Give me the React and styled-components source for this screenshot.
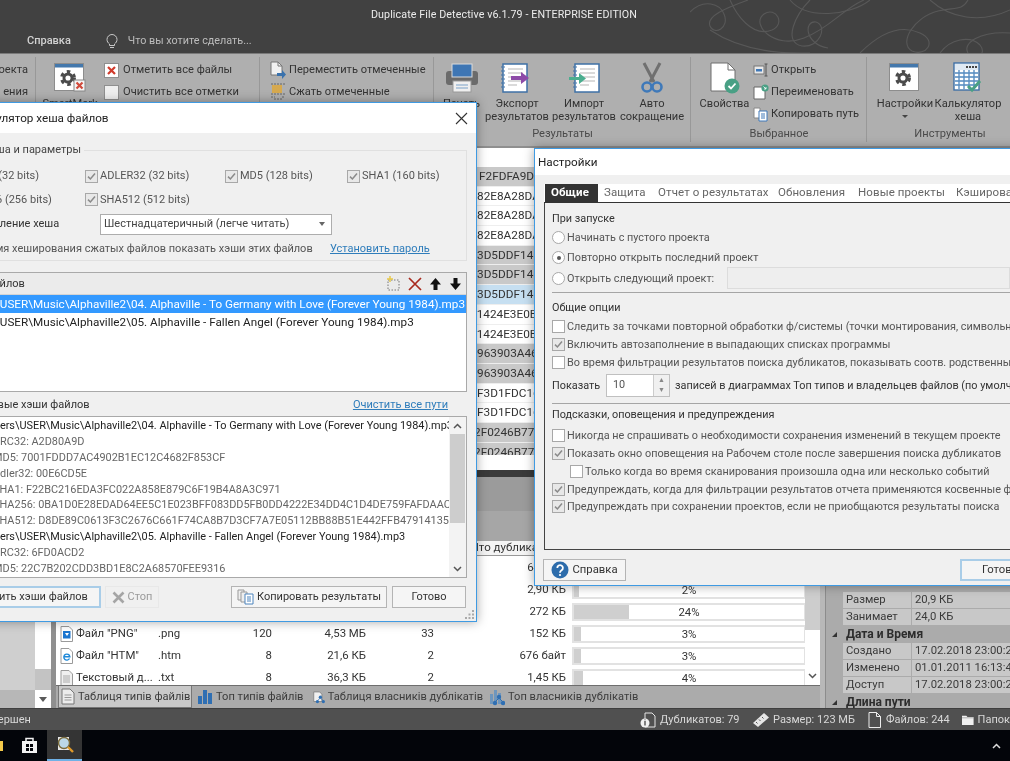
import React from 'react';
import styled, { createGlobalStyle } from 'styled-components';

const UI = `Roboto,"Noto Sans","Liberation Sans",sans-serif`;

const Global = createGlobalStyle`
  html, body { margin: 0; padding: 0; width: 1010px; height: 761px; overflow: hidden; background: #000; }
  * { box-sizing: border-box; }
`;

const Root = styled.div`
  position: relative; width: 1010px; height: 761px; overflow: hidden;
  display: flex; flex-direction: column;
  font: 11px/1.2 ${UI}; color: #333; filter: blur(0.4px);
`;

/* ---------- title ---------- */
const TitleArea = styled.header`
  position: relative; height: 53px; flex: none; background: #414141; color: #e6e6e6;
`;
const TitleText = styled.div`
  height: 29px; line-height: 29px; text-align: center; font-size: 10.7px; color: #ececec; letter-spacing: .1px; padding-left: 3px; padding-right: 5px;
`;
const MenuRow = styled.div`
  display: flex; align-items: center; height: 24px; padding-left: 27px; color: #d6d6d6; font-size: 11px;
`;
const MenuLabel = styled.span`font-weight: 500; color: #d2d2d2; margin-right: 35px;`;
const Hint = styled.span`color: #bdbdbd; margin-left: 10px; font-size: 10.8px;`;
const FlourishBox = styled.svg`position: absolute; right: 0; top: 0;`;

/* ---------- ribbon ---------- */
const Ribbon = styled.nav`
  height: 95px; flex: none; display: flex; background: #afafaf; border-top: 1px solid #7a7a7a; border-bottom: 2px solid #8f8f8f; overflow: hidden; font-size: 11.1px;
`;
const Group = styled.section`
  flex: none; width: ${p => p.$w}px; display: flex; flex-direction: column; position: relative;
  &::after { content: ''; position: absolute; right: 0; top: 3px; bottom: 4px; width: 1px; background: #989898; }
`;
const GroupBody = styled.div`flex: 1; display: flex; padding-left: ${p => p.$pad || 0}px; overflow: hidden;`;
const GroupLabel = styled.div`height: 21px; text-align: center; color: #4a4a4a; line-height: 18px;`;
const Big = styled.div`
  flex: none; width: ${p => p.$w}px; display: flex; flex-direction: column; align-items: center; padding-top: 7px; color: #333; white-space: nowrap;
`;
const BigIcon = styled.div`height: 34px; display: flex; align-items: center; justify-content: center;`;
const BigText = styled.div`text-align: center; line-height: 13px; margin-top: 2px;`;
const Caret = styled.div`width: 0; height: 0; border: 3px solid transparent; border-top-color: #444; margin: 5px auto 0;`;
const SmallList = styled.div`display: flex; flex-direction: column; padding-top: 5px; padding-left: ${p => p.$pad || 0}px;`;
const SmallItem = styled.div`display: flex; align-items: center; gap: ${p => p.$gap ?? 4}px; height: 22px; white-space: nowrap; color: #333;`;
const RightLine = styled.div`height: 22px; width: 36px; display: flex; align-items: center; justify-content: flex-end; padding-right: 8px; color: #333; white-space: nowrap;`;

/* ---------- workspace ---------- */
const Workspace = styled.main`flex: 1; display: flex; min-height: 0; background: #ababab;`;
const LeftPane = styled.aside`flex: none; width: 56px; display: flex; background: #8f8f8f;`;
const LeftTree = styled.div`width: 35px; background: #cfcfcf; border-bottom: 18px solid #b7b7b7;`;
const LeftBar = styled.div`width: 16px; display: flex; flex-direction: column; justify-content: flex-end; background: #fff;`;
const LeftThumb = styled.div`height: 21px; background: #c3c3c3; flex: none;`;
const LeftArrow = styled.div`height: 18px; background: #fff; display: flex; align-items: center; justify-content: center; flex: none;`;
const TriDown = styled.div`width: 0; height: 0; border: 4px solid transparent; border-top: 5px solid #5a5a5a; margin-top: 5px;`;
const Center = styled.div`flex: none; width: 764px; display: flex; flex-direction: column; min-height: 0;`;
const HashList = styled.div`height: 322px; background: #fff; padding-top: 19px; overflow: hidden; flex: none;`;
const HashView = styled.div`height: 288px; overflow: hidden;`;
const HashRow = styled.div`
  height: 19.7px; line-height: 19.7px; padding-left: ${p => p.$pad}px; white-space: nowrap; color: #333; font-size: 11.8px;
  background: ${p => p.$tone === 'sel' ? '#c6dff1' : p.$tone === 'gray' ? '#c9c9c9' : '#fff'};
  border-bottom: 1px solid #eee;
`;
const Splitter = styled.div`height: 7px; flex: none; background: #3a3a3a;`;
const GrayChart = styled.div`height: 34px; flex: none; background: #9b9b9b;`;
const GrayChartLower = styled.div`height: 30px; flex: none; background: #a6a6a6;`;
const ChartCaption = styled.div`height: 15px; flex: none; background: #f4f4f4; padding-left: 415px; line-height: 12px; white-space: nowrap; border-bottom: 1px solid #999; font-size: 11.5px;`;
const LowerWrap = styled.div`flex: 1; display: flex; min-height: 0; background: #fff;`;
const Table = styled.div`flex: 1; overflow: hidden; padding-left: 4px; padding-top: 1px;`;
const Row = styled.div`
  display: grid; grid-template-columns: 98px 62px 52px 94px 68px 132px 240px; height: 22px; align-items: center; white-space: nowrap; color: #333; font-size: 11.4px;
`;
const NameCell = styled.div`display: flex; align-items: center; gap: 3px; overflow: hidden;`;
const Num = styled.div`text-align: right;`;
const BarCell = styled.div`padding-left: 6px;`;
const Bar = styled.div`position: relative; height: 18px; border: 2px solid #e2e2e2; background: #fff; text-align: center; line-height: 14px; color: #333;`;
const BarFill = styled.div`position: absolute; left: 0; top: 0; bottom: 0; background: #cfcfcf;`;
const BarText = styled.span`position: relative;`;
const VScroll = styled.div`width: 15px; flex: none; display: flex; flex-direction: column; background: #fff;`;
const VThumb = styled.div`height: 74px; flex: none; background: #cdcdcd;`;
const VSpace = styled.div`flex: 1;`;
const VArrow = styled.div`height: 19px; display: flex; justify-content: center; align-items: center; color: #555;`;
const TabsBar = styled.div`height: 23px; flex: none; display: flex; align-items: stretch; background: #ababab; border-top: 1px solid #6e6e6e; padding-left: 2px; white-space: nowrap;`;
const BottomTab = styled.div`
  display: flex; align-items: center; gap: 3px; flex: none; width: ${p => p.$w}px; padding-left: ${p => p.$active ? 2 : 6}px; color: #3c3c3c; font-size: 11.1px;
  background: ${p => p.$active ? '#c9c9c9' : 'transparent'}; ${p => p.$active ? 'border: 1px solid #777; border-top: 0;' : ''}
`;
const RightPane = styled.aside`flex: 1; overflow: hidden; background: #ababab; border-left: 5px solid #b8b8b8; padding-left: 5px; box-shadow: inset 1px 0 #8c8c8c;`;
const PropGrid = styled.div`margin-top: 444px; display: flex; flex-direction: column;`;
const PropHead = styled.div`height: 17px; line-height: 17px; display: flex; align-items: center; font-weight: 700; color: #2c2c2c; font-size: 12px;`;
const PropTri = styled.span`width: 0; height: 0; border-bottom: 5px solid #333; border-left: 5px solid transparent; margin: 0 9px 0 2px;`;
const PropRow = styled.div`height: 17px; display: grid; grid-template-columns: 68px 1fr; margin-left: 13px; column-gap: 1px; line-height: 16px; white-space: nowrap; color: #3a3a3a;`;
const PropCell = styled.div`background: #c8c8c8; padding-left: 3px; border-bottom: 1px solid #ababab; font-size: 11.3px;`;

/* ---------- status and task bars ---------- */
const StatusBar = styled.footer`height: 22px; flex: none; background: #505050; color: #d8d8d8; display: flex; align-items: center; white-space: nowrap; border-top: 1px solid #3f3f3f; font-size: 11px;`;
const StatusLeft = styled.div`flex: 1; margin-left: -21px;`;
const StatusItem = styled.div`display: flex; align-items: center; gap: ${p => p.$gap}px; width: ${p => p.$w}px; flex: none;`;
const TaskBar = styled.div`height: 31px; flex: none; background: #03050a; display: flex; align-items: stretch; padding-left: 47px; position: relative;`;
const TaskLeft = styled.div`position: absolute; left: 21px; top: 0; height: 100%; display: flex; align-items: center;`;
const TaskFolder = styled.div`position: absolute; left: 0; top: 11px; width: 3px; height: 10px; background: #f4c94a;`;
const TaskApp = styled.div`width: 35px; background: #343434; border-bottom: 2px solid #6fb1e6; display: flex; align-items: center; justify-content: center;`;
const TaskEnd = styled.div`position: absolute; right: 9px; top: 9px; color: #dcdcdc;`;

/* ---------- dialog common ---------- */
const Dialog = styled.div`
  position: absolute; left: ${p => p.$x}px; top: ${p => p.$y}px; width: ${p => p.$w}px; height: ${p => p.$h}px;
  background: #f0f0f0; border: 1px solid #3f9ae2; box-shadow: 0 0 10px rgba(0,0,0,.35); display: flex; flex-direction: column;
`;
const DlgTitle = styled.div`
  height: ${p => p.$h}px; flex: none; background: #fff; display: flex; align-items: center; justify-content: space-between; color: #222; font-size: 11.7px;
  padding: 0 8px 0 ${p => p.$pad}px;
`;
const Btn = styled.div`
  height: 22px; flex: none; display: flex; align-items: center; justify-content: center; gap: 3px; width: ${p => p.$w}px; white-space: nowrap;
  margin-left: ${p => p.$ml || 0}px; color: ${p => p.$off ? '#9a9a9a' : '#333'};
  border: ${p => p.$focus ? '2px solid #a9cde8' : `1px solid ${p.$off ? '#e8e8e8' : '#b4b4b4'}`}; background: ${p => p.$off ? '#f0f0f0' : '#f5f5f5'};
`;
const Link = styled.span`color: #2f7dbb; text-decoration: underline; white-space: nowrap;`;
const Box = styled.span`
  flex: none; width: 13px; height: 13px; border: 1px solid #a8a8a8; background: ${p => p.$checked ? '#e8e8e8' : '#fff'}; display: inline-flex; align-items: center; justify-content: center;
`;
const CheckRow = styled.div`display: flex; align-items: center; gap: 2px; white-space: nowrap; height: ${p => p.$h || 18}px; padding-left: ${p => p.$pad || 0}px; color: #555; flex: none;`;
const Radio = styled.span`
  flex: none; width: 13px; height: 13px; border-radius: 50%; border: 1px solid #a8a8a8; background: #fff; display: inline-flex; align-items: center; justify-content: center;
  &::after { content: ''; width: 4px; height: 4px; border-radius: 50%; background: ${p => p.$on ? '#555' : 'transparent'}; }
`;
const TickSvg = () => <svg width="9" height="9" viewBox="0 0 9 9"><path d="M1 4.6 3.4 7 8 1.5" fill="none" stroke="#8a8a8a" strokeWidth="1.5"/></svg>;
const Check = ({ on, children, h, pad }) => <CheckRow $h={h} $pad={pad}><Box $checked={on}>{on && <TickSvg />}</Box><span>{children}</span></CheckRow>;

/* hash dialog */
const HashBody = styled.div`flex: 1; padding: 0 9px 0 3px; display: flex; flex-direction: column; position: relative; font-size: 11px;`;
const Field = styled.fieldset`margin: 10px 0 0; height: 118px; border: 1px solid #e0e0e0; padding: 0 0 0 2px; flex: none; min-width: 0;`;
const FieldLegend = styled.legend`padding: 0 3px 0 0; color: #444; line-height: 14px; margin-left: -24px;`;
const AlgoGrid = styled.div`display: grid; grid-template-columns: 138px 140px 122px 1fr; row-gap: 7.5px; margin-top: 11px;`;
const ComboRow = styled.div`display: flex; align-items: center; height: 21px; margin-top: 6px; white-space: nowrap; color: #333;`;
const ComboLabel = styled.span`width: 153px; flex: none; padding-left: 3px;`;
const Combo = styled.div`width: 232px; height: 21px; background: #fff; border: 1px solid #adadad; display: flex; align-items: center; justify-content: space-between; padding: 0 6px 0 3px; color: #444;`;
const ComboTri = styled.span`width: 0; height: 0; border: 3px solid transparent; border-top: 4px solid #666; margin-top: 3px;`;
const PassRow = styled.div`display: flex; align-items: center; height: 16px; margin-top: 6px; white-space: nowrap; color: #555;`;
const PassText = styled.span`width: 383px; flex: none; padding-left: 14px;`;
const ListBox = styled.div`margin-top: 11px; height: 120px; flex: none; border: 1px solid #a9a9a9; background: #fff; overflow: hidden;`;
const ListHead = styled.div`height: 22px; display: flex; align-items: center; justify-content: space-between; background: #ebebeb; padding: 0 4px 0 0; color: #333; border-bottom: 1px solid #d4d4d4;`;
const ListIcons = styled.div`display: flex; align-items: center; gap: 7px;`;
const ListItem = styled.div`
  height: 18px; line-height: 18px; padding-left: 5px; white-space: nowrap; overflow: hidden; font-size: 11.7px;
  background: ${p => p.$sel ? '#3399ff' : 'transparent'}; color: ${p => p.$sel ? '#fff' : '#222'};
`;
const ResultHead = styled.div`display: flex; align-items: center; justify-content: space-between; height: 17px; margin-top: 4px; padding: 0 19px 0 31px; color: #333; flex: none;`;
const OutBox = styled.div`margin-top: 3px; height: 162px; flex: none; border: 1px solid #a9a9a9; background: #fff; display: flex; overflow: hidden;`;
const OutText = styled.div`flex: 1; overflow: hidden; white-space: nowrap; padding-top: 1px;`;
const OutLine = styled.div`height: 15.9px; line-height: 15.9px; padding-left: ${p => p.$path ? 28 : 48}px; color: ${p => p.$path ? '#222' : '#666'}; font-size: 10.9px;`;
const OutScroll = styled.div`width: 17px; flex: none; display: flex; flex-direction: column; background: #f3f3f3;`;
const OutArrow = styled.div`height: 17px; flex: none; display: flex; align-items: center; justify-content: center; color: #555;`;
const OutThumb = styled.div`height: 89px; flex: none; background: #cdcdcd; margin: 0 1px;`;
const BtnRow = styled.div`display: flex; margin-top: 8px; flex: none;`;
const Grip = styled.svg`position: absolute; right: 1px; bottom: 1px;`;

/* settings dialog */
const SettingsBody = styled.div`flex: 1; display: flex; flex-direction: column; font-size: 10.85px; min-height: 0;`;
const TabStrip = styled.div`display: flex; align-items: stretch; height: 19px; margin: 9px 0 0 9px; background: #fff; white-space: nowrap; flex: none; padding-left: 1px; border-bottom: 1px solid #333; font-size: 11.5px;`;
const SetTab = styled.div`
  padding: 0 6px; line-height: 17px; width: ${p => p.$w}px; flex: none; font-weight: ${p => p.$active ? 700 : 400};
  background: ${p => p.$active ? '#333' : 'transparent'}; color: ${p => p.$active ? '#fff' : '#666'}; letter-spacing: .1px;
`;
const Panel = styled.div`height: 347px; flex: none; margin-left: 9px; border-left: 1px solid #444; border-bottom: 1px solid #444; padding: 7px 0 0 7px; overflow: hidden; display: flex; flex-direction: column;`;
const Section = styled.div`height: 17px; line-height: 17px; flex: none; color: #333; white-space: nowrap; margin-bottom: ${p => p.$b || 0}px;`;
const RadioRow = styled.div`display: flex; align-items: center; gap: 2px; height: 20.5px; flex: none; white-space: nowrap; color: #555;`;
const ProjectLabel = styled.span`width: 158px; flex: none;`;
const PathInput = styled.div`width: 283px; height: 22px; background: #eee; border: 1px solid #dcdcdc;`;
const Rule = styled.div`height: 1px; flex: none; background: #a5a5a5; margin-top: ${p => p.$t}px; margin-bottom: ${p => p.$b}px;`;
const ShowRow = styled.div`display: flex; align-items: center; height: 23px; margin-top: 3px; flex: none; white-space: nowrap; color: #333;`;
const ShowLabel = styled.span`width: 54px; flex: none;`;
const Spin = styled.div`width: 64px; height: 23px; margin-right: 5px; border: 1px solid #c0c0c0; display: flex; background: #fff; flex: none;`;
const SpinVal = styled.div`flex: 1; padding-left: 6px; line-height: 19px; color: #555;`;
const SpinBtns = styled.div`width: 16px; display: flex; flex-direction: column; background: #f0f0f0; border-left: 1px solid #ccc;`;
const SpinPart = styled.div`flex: 1; display: flex; align-items: center; justify-content: center; color: #888; font-size: 7px; line-height: 7px;`;
const Footer = styled.div`display: flex; justify-content: space-between; width: 505px; padding-left: 8px; margin-top: 9px; flex: none; font-size: 11.3px;`;

/* ---------- icons (drawings) ---------- */
const Gear = ({ cx, cy, r, fill = '#4b4b4b' }) => (
  <g>
    <circle cx={cx} cy={cy} r={r} fill="none" stroke={fill} strokeWidth={r * .45} strokeDasharray={`${r * .55} ${r * .55}`} />
    <circle cx={cx} cy={cy} r={r * .62} fill="none" stroke={fill} strokeWidth={r * .45} />
  </g>
);
const WinIcon = ({ badge }) => (
  <svg width="32" height="30" viewBox="0 0 32 30">
    <rect x=".5" y=".5" width="29" height="27" fill="#fff" stroke="#8d8d8d" />
    <rect x="1" y="1" width="28" height="3.5" fill="#4478ac" />
    <Gear cx={14} cy={15} r={6.5} />
    {badge && <g><rect x="20" y="17" width="11" height="11" fill="#f5f5f5" stroke="#888" /><path d="M22.5 19.5 28.5 25.5M28.5 19.5 22.5 25.5" stroke="#d04a3c" strokeWidth="2.2" /></g>}
  </svg>
);
const MarkBox = () => <svg width="15" height="15" viewBox="0 0 15 15"><rect x=".5" y=".5" width="14" height="14" fill="#fff" stroke="#8f8f8f"/><path d="M4 4 11 11M11 4 4 11" stroke="#d13b2c" strokeWidth="2.2"/></svg>;
const ClearBox = () => <svg width="15" height="15" viewBox="0 0 15 15"><rect x=".5" y=".5" width="14" height="14" fill="#efefef" stroke="#8f8f8f"/></svg>;
const MoveIcon = () => <svg width="16" height="18" viewBox="0 0 16 18"><path d="M1 1h7l4 4v9H1z" fill="#f1f1f1" stroke="#777"/><path d="M8 1v4h4" fill="none" stroke="#777"/><path d="M7 12h5V9l4 4.500-4 4.500v-3H7z" fill="#3a72ad"/></svg>;
const ZipIcon = () => <svg width="16" height="18" viewBox="0 0 16 18"><rect x="2" y="2" width="10" height="8" fill="#d6a94f"/><path d="M1 1h14M1 11h14M1 14h4M12 14h3M4 16h8" stroke="#666" strokeDasharray="2 1"/></svg>;
const PrintIcon = () => (
  <svg width="34" height="30" viewBox="0 0 34 30">
    <rect x="1" y="8" width="32" height="14" rx="3" fill="#6b6b6b"/>
    <rect x="7" y="1" width="20" height="13" fill="#3e76b4" stroke="#dcdcdc"/>
    <rect x="8" y="18" width="18" height="11" fill="#f0f0f0" stroke="#9a9a9a"/>
    <path d="M11 22h12M11 25h12" stroke="#7ba1c8"/>
  </svg>
);
const NoteIcon = ({ arrow, dir }) => {
  const x = dir === 'in' ? 7 : 2;
  return (
    <svg width="32" height="30" viewBox="0 0 32 30">
      <rect x={x} y="1" width="24" height="28" fill="#fff" stroke="#3f71a7" strokeWidth="1.5" />
      {[4, 8, 12, 16, 20, 24].map(y => <path key={y} d={`M${x - 2} ${y}h4`} stroke="#3f71a7" strokeWidth="1.2" strokeDasharray="1.500 1" />)}
      {[6, 10, 14, 18, 22].map(y => <path key={y} d={`M${x + 5} ${y}h${y === 22 ? 9 : 15}`} stroke="#b5b5b5" />)}
      <path d={dir === 'in' ? 'M1 14h10v-4l7 5.500-7 5.500v-4H1z' : 'M10 13h10V9l8 6-8 6v-4H10z'} fill={arrow} />
    </svg>
  );
};
const Scissors = () => (
  <svg width="24" height="32" viewBox="0 0 24 32">
    <path d="M4 1 14 20M20 1 10 20" stroke="#707070" strokeWidth="3" />
    <circle cx="7" cy="25" r="4.500" fill="none" stroke="#3f79b9" strokeWidth="2.600"/>
    <circle cx="17" cy="25" r="4.500" fill="none" stroke="#3f79b9" strokeWidth="2.600"/>
  </svg>
);
const PropsIcon = () => (
  <svg width="34" height="32" viewBox="0 0 34 32">
    <path d="M3 1h17l7 7v21H3z" fill="#fff" stroke="#6f6f6f"/><path d="M20 1v7h7" fill="none" stroke="#6f6f6f"/>
    <circle cx="24" cy="24" r="7.500" fill="#49a085"/><path d="M20.500 24l2.500 2.500 4.500-5" fill="none" stroke="#fff" strokeWidth="1.800"/>
  </svg>
);
const OpenIcon = () => <svg width="16" height="14" viewBox="0 0 16 14"><rect x="1" y="3" width="10" height="8" fill="#e8e8e8" stroke="#777"/><rect x="3" y="6" width="6" height="2.500" fill="#3f79b9"/><path d="M13 1v12M11.500 1h3M11.500 13h3" stroke="#555"/></svg>;
const RenameIcon = () => <svg width="16" height="16" viewBox="0 0 16 16"><path d="M1 3h9l2 2v10H1z" fill="#fff" stroke="#666"/><circle cx="12" cy="4" r="3.600" fill="#49a085"/><path d="M10.500 2.500 13 5M13 3v2h-2" fill="none" stroke="#fff" strokeWidth=".8"/></svg>;
const CopyPathIcon = () => <svg width="16" height="15" viewBox="0 0 16 15"><path d="M1 1h6v10H1z" fill="#fff" stroke="#888"/><path d="M6 4h8v10H6z" fill="#fff" stroke="#3f79b9"/><path d="M8 7h4M8 9h4M8 11h4" stroke="#3f79b9"/></svg>;
const CalcIcon = () => (
  <svg width="30" height="32" viewBox="0 0 30 32">
    <rect x="1" y="1" width="25" height="27" fill="#fff" stroke="#3f71a7" strokeWidth="1.400"/>
    <rect x="2" y="2" width="23" height="6" fill="#dfe9f3"/>
    <path d="M13 5h2M16 5h2M19 5h2M22 5h2" stroke="#444" strokeWidth="2"/>
    {[11, 15, 19, 23].map(y => <path key={y} d={`M2 ${y}h23`} stroke="#5b8fc2" strokeWidth="1.600"/>)}
    {[6, 11, 16, 21].map(x => <path key={x} d={`M${x} 8v19`} stroke="#5b8fc2" strokeWidth="1.400"/>)}
    <path d="M15 24l4 4 8-9" fill="none" stroke="#49a085" strokeWidth="3"/>
  </svg>
);
const FileIcon = ({ kind }) => (
  <svg width="13" height="16" viewBox="0 0 13 16" style={{ flex: 'none' }}>
    <path d="M1 .5h8l3.500 3.500v11.500H1z" fill={kind === 'txt' ? '#f0f0f0' : '#fff'} stroke="#9a9a9a"/>
    {kind === 'png' && <g><rect x="3" y="5" width="7.500" height="7.500" fill="#1b76d0"/><path d="M5 7h4l-2 3z" fill="#fff"/></g>}
    {kind === 'htm' && <path d="M9.500 10.500a3 3 0 1 1 .3-1.800H4" fill="none" stroke="#1e88d8" strokeWidth="1.400"/>}
    {kind === 'txt' && <path d="M3 6h7M3 8h7M3 10h7M3 12h7" stroke="#aaa"/>}
  </svg>
);
const TabDoc = () => <svg width="14" height="17" viewBox="0 0 14 17"><path d="M1 1h8l4 4v11H1z" fill="#ececec" stroke="#777"/><path d="M3.500 7h7M3.500 9.500h7M3.500 12h7" stroke="#999"/></svg>;
const TabBars = () => <svg width="15" height="14" viewBox="0 0 15 14"><path d="M0 6h4v8H0zM5 0h4v14H5zM10 3h4v11h-4z" fill="#2f6fb3"/></svg>;
const TabOwner = ({ bars }) => (
  <svg width="16" height="17" viewBox="0 0 16 17">
    {bars ? <path d="M1 5h3v10H1zM5 1h3v14H5zM9 4h3v11H9z" fill="#6e96bd"/> : <path d="M1 1h8l3 3v10H1z" fill="#f0f0f0" stroke="#777"/>}
    <circle cx="10" cy="8" r="2.200" fill="#2f6fb3"/><circle cx="6" cy="14" r="2.200" fill="#2f6fb3"/><circle cx="14" cy="14" r="2.200" fill="#2f6fb3"/>
    <path d="M10 9 6 13M10 9l4 4" stroke="#2f6fb3"/>
  </svg>
);
const Bulb = () => <svg width="12" height="15" viewBox="0 0 12 15"><path d="M3.500 10C2 8.800 1 7.500 1 5.500a5 5 0 0 1 10 0c0 2-1 3.300-2.500 4.500v1.500h-5zM4 13.500h4" fill="none" stroke="#c8c8c8" strokeWidth="1"/></svg>;
const Close = ({ s = 13 }) => <svg width={s} height={s} viewBox="0 0 13 13"><path d="M1 1 12 12M12 1 1 12" stroke="#333" strokeWidth="1.100"/></svg>;
const ChevUp = () => <svg width="9" height="6" viewBox="0 0 9 6"><path d="M1 5 4.500 1.500 8 5" fill="none" stroke="currentColor" strokeWidth="1.500"/></svg>;
const ChevDown = () => <svg width="9" height="6" viewBox="0 0 9 6"><path d="M1 1 4.500 4.500 8 1" fill="none" stroke="currentColor" strokeWidth="1.500"/></svg>;
const NewItem = () => <svg width="15" height="15" viewBox="0 0 15 15"><rect x="2" y="4" width="11" height="10" fill="none" stroke="#777" strokeDasharray="1.500 1.500"/><path d="M4 0v6M1 3h6" stroke="#e8c94a" strokeWidth="1.500"/></svg>;
const RedX = () => <svg width="14" height="14" viewBox="0 0 14 14"><path d="M1 1 13 13M13 1 1 13" stroke="#a92a1e" strokeWidth="1.700"/></svg>;
const ArrowUp = () => <svg width="13" height="14" viewBox="0 0 13 14"><path d="M6.500 1 12 7.500H8.500V13h-4V7.500H1z" fill="#111"/></svg>;
const ArrowDown = () => <svg width="13" height="14" viewBox="0 0 13 14"><path d="M6.500 13 12 6.500H8.500V1h-4v5.500H1z" fill="#111"/></svg>;
const GrayX = () => <svg width="13" height="13" viewBox="0 0 13 13"><path d="M1.500 1.500 11.500 11.500M11.500 1.500 1.500 11.500" stroke="#a5a5a5" strokeWidth="2.600"/></svg>;
const CopyBtnIcon = () => <svg width="17" height="16" viewBox="0 0 17 16"><path d="M1 1h6v10H1z" fill="#eee" stroke="#999"/><path d="M4 3h6v10H4z" fill="#eee" stroke="#999"/><path d="M8 5h8v10H8z" fill="#fff" stroke="#4d84bd"/><path d="M10 8h4M10 10h4M10 12h4" stroke="#4d84bd"/></svg>;
const HelpIcon = () => <svg width="18" height="18" viewBox="0 0 18 18"><circle cx="9" cy="9" r="8.500" fill="#2d6cab"/><path d="M6.300 7a2.800 2.800 0 1 1 4.300 2.300c-1 .7-1.600 1.200-1.600 2.400" fill="none" stroke="#fff" strokeWidth="1.800"/><circle cx="9" cy="14" r="1.100" fill="#fff"/></svg>;
const StDup = () => <svg width="16" height="16" viewBox="0 0 16 16"><path d="M5 1h7l3 3v11H5z" fill="none" stroke="#e4e4e4"/><circle cx="5" cy="11" r="4.500" fill="#f0f0f0"/><path d="M5 9v4.500M5 7.500v.8" stroke="#444" strokeWidth="1.300"/></svg>;
const StRuler = () => <svg width="18" height="16" viewBox="0 0 18 16"><path d="M1 11 12 1l5 4.500L6 15z" fill="#e6e6e6"/><path d="M4 10l1.500 1.500M7 7.500 8.500 9M10 5l1.500 1.500" stroke="#555"/></svg>;
const StFile = () => <svg width="13" height="16" viewBox="0 0 13 16"><path d="M1 .5h7.500l4 4v11H1z" fill="none" stroke="#ececec"/><path d="M8.500 .5v4h4" fill="none" stroke="#ececec"/></svg>;
const StFolder = () => <svg width="16" height="14" viewBox="0 0 16 14"><path d="M0 1h6l1.500 2H16v11H0z" fill="#f0f0f0"/><path d="M0 4h16" stroke="#505050" strokeWidth=".6"/></svg>;
const StoreIcon = () => <svg width="17" height="17" viewBox="0 0 17 17"><path d="M1 4h15v12H1z" fill="#f2f2f2"/><path d="M5 4V1.500h7V4" fill="none" stroke="#f2f2f2" strokeWidth="1.500"/><path d="M5 7h3v3H5zM9 7h3v3H9zM5 11h3v3H5zM9 11h3v3H9z" fill="#03050a"/></svg>;
const AppIcon = () => <svg width="18" height="19" viewBox="0 0 18 19"><rect x="2" y="2" width="11" height="13" fill="#e7e7e7"/><circle cx="8" cy="8" r="5.500" fill="#bcd8e8" stroke="#7a6a3a" strokeWidth="1.400"/><path d="m12 12 5 5" stroke="#e09a2a" strokeWidth="2.400"/></svg>;

const Flourish = () => (
  <FlourishBox width="320" height="53" viewBox="0 0 320 53" fill="none" stroke="#585858" strokeWidth="1.100">
    <path d="M0 12C14-2 30 4 34 14c6 14-10 22-14 12S36 8 58 0" />
    <path d="M40 0c6 14 22 38 42 30 14-6 4-24-8-16-14 10 10 36 40 24 26-10 40-30 60-38" />
    <path d="M120 0c-14 14-28 42-8 46 18 2 26-20 14-24-12-2-12 22 12 26" />
    <path d="M170 53c16-16 38-30 60-20 18 8 6 24-8 18-14-8 2-34 26-40 16-4 24 0 30-11" />
    <path d="M100 0c16 20 60 16 80 0M240 0c20 18 50 24 80 10" />
    <path d="M250 53c10-14 30-18 40-8 8 10-6 16-12 8-6-10 12-22 42-20" />
    <path d="M20 30c30 20 70 24 100 23" />
  </FlourishBox>
);

const Small = ({ icon, children, gap }) => <SmallItem $gap={gap}>{icon}<span>{children}</span></SmallItem>;

const hashRows = [
  ['F2FDFA9DA', 'gray', 423], ['82E8A28DA'], ['82E8A28DA'], ['82E8A28DA'], ['3D5DDF14E', 'gray'], ['3D5DDF14E', 'gray'], ['3D5DDF14E', 'sel'],
  ['31424E3E0B', null, 414], ['31424E3E0B', null, 414], ['963903A46', 'gray'], ['963903A46', 'gray'], ['F3D1FDC16'], ['F3D1FDC16'], ['2F0246B77F', 'gray', 418], ['2F0246B77F', 'gray', 418],
];
const tableRows = [
  ['txt', 'Файл "MP3"', '.mp3', '44', '108 МБ', '12', '64,8 КБ', 62],
  ['txt', 'Файл "JPG"', '.jpg', '16', '1,22 МБ', '4', '2,90 КБ', 2],
  ['txt', 'Файл "ZIP"', '.zip', '12', '8,05 МБ', '6', '272 КБ', 24],
  ['png', 'Файл "PNG"', '.png', '120', '4,53 МБ', '33', '152 КБ', 3],
  ['htm', 'Файл "HTM"', '.htm', '8', '21,6 КБ', '2', '676 байт', 3],
  ['txt', 'Текстовый д...', '.txt', '8', '36,3 КБ', '2', '1,45 КБ', 4],
];
const algos = ['CRC32 (32 bits)', 'ADLER32 (32 bits)', 'MD5 (128 bits)', 'SHA1 (160 bits)', 'SHA256 (256 bits)', 'SHA512 (512 bits)'];
const outLines = [
  [1, 'C:\\Users\\USER\\Music\\Alphaville2\\04. Alphaville - To Germany with Love (Forever Young 1984).mp3'],
  [0, 'CRC32: A2D80A9D'],
  [0, 'MD5: 7001FDDD7AC4902B1EC12C4682F853CF'],
  [0, 'Adler32: 00E6CD5E'],
  [0, 'SHA1: F22BC216EDA3FC022A858E879C6F19B4A8A3C971'],
  [0, 'SHA256: 0BA1D0E28EDAD64EE5C1E023BFF083DD5FB0DD4222E34DD4C1D4DE759FAFDAAC'],
  [0, 'SHA512: D8DE89C0613F3C2676C661F74CA8B7D3CF7A7E05112BB88B51E442FFB47914135D41'],
  [1, 'C:\\Users\\USER\\Music\\Alphaville2\\05. Alphaville - Fallen Angel (Forever Young 1984).mp3'],
  [0, 'CRC32: 6FD0ACD2'],
  [0, 'MD5: 22C7B202CDD3BD1E8C2A68570FEE9316'],
];

export default function App() {
  return (
    <Root>
      <Global />
      <TitleArea>
        <TitleText>Duplicate File Detective v6.1.79 - ENTERPRISE EDITION</TitleText>
        <MenuRow><MenuLabel>Справка</MenuLabel><Bulb /><Hint>Что вы хотите сделать...</Hint></MenuRow>
        <Flourish />
      </TitleArea>

      <Ribbon>
        <Group $w={36}>
          <GroupBody><SmallList><RightLine>проекта</RightLine><RightLine>ения</RightLine></SmallList></GroupBody>
          <GroupLabel />
        </Group>
        <Group $w={224}>
          <GroupBody>
            <Big $w={68}><BigIcon><WinIcon badge /></BigIcon><BigText>SmartMark</BigText></Big>
            <SmallList>
              <Small icon={<MarkBox />}>Отметить все файлы</Small>
              <Small icon={<ClearBox />}>Очистить все отметки</Small>
            </SmallList>
          </GroupBody>
          <GroupLabel />
        </Group>
        <Group $w={174}>
          <GroupBody>
            <SmallList $pad={10}>
              <Small icon={<MoveIcon />} gap={3}>Переместить отмеченные</Small>
              <Small icon={<ZipIcon />} gap={3}>Сжать отмеченные</Small>
            </SmallList>
          </GroupBody>
          <GroupLabel />
        </Group>
        <Group $w={257}>
          <GroupBody>
            <Big $w={55}><BigIcon><PrintIcon /></BigIcon><BigText>Печать</BigText></Big>
            <Big $w={56}><BigIcon><NoteIcon arrow="#8d4aa8" dir="out" /></BigIcon><BigText>Экспорт<br />результатов</BigText></Big>
            <Big $w={78}><BigIcon><NoteIcon arrow="#4aae8f" dir="in" /></BigIcon><BigText>Импорт<br />результатов</BigText></Big>
            <Big $w={58}><BigIcon><Scissors /></BigIcon><BigText>Авто<br />сокращение</BigText></Big>
          </GroupBody>
          <GroupLabel>Результаты</GroupLabel>
        </Group>
        <Group $w={176}>
          <GroupBody $pad={5}>
            <Big $w={57}><BigIcon><PropsIcon /></BigIcon><BigText>Свойства</BigText></Big>
            <SmallList>
              <Small icon={<OpenIcon />} gap={2}>Открыть</Small>
              <Small icon={<RenameIcon />} gap={2}>Переименовать</Small>
              <Small icon={<CopyPathIcon />} gap={2}>Копировать путь</Small>
            </SmallList>
          </GroupBody>
          <GroupLabel>Выбранное</GroupLabel>
        </Group>
        <Group $w={166}>
          <GroupBody $pad={4}>
            <Big $w={68}><BigIcon><WinIcon /></BigIcon><BigText>Настройки<Caret /></BigText></Big>
            <Big $w={58}><BigIcon><CalcIcon /></BigIcon><BigText>Калькулятор<br />хеша</BigText></Big>
          </GroupBody>
          <GroupLabel>Инструменты</GroupLabel>
        </Group>
      </Ribbon>

      <Workspace>
        <LeftPane>
          <LeftTree />
          <LeftBar><LeftThumb /><LeftArrow><TriDown /></LeftArrow></LeftBar>
        </LeftPane>
        <Center>
          <HashList>
            <HashView>
              {hashRows.map(([h, t, pad], i) => <HashRow key={i} $tone={t} $pad={pad || 421}>{h}</HashRow>)}
            </HashView>
          </HashList>
          <Splitter />
          <GrayChart />
          <GrayChartLower />
          <ChartCaption>Что дубликатов</ChartCaption>
          <LowerWrap>
            <Table>
              {tableRows.map(([k, n, e, c, s, d, ds, pct]) => (
                <Row key={e}>
                  <NameCell><FileIcon kind={k} /><span>{n}</span></NameCell>
                  <div>{e}</div><Num>{c}</Num><Num>{s}</Num><Num>{d}</Num><Num>{ds}</Num>
                  <BarCell><Bar><BarFill style={{ width: `${pct}%` }} /><BarText>{pct}%</BarText></Bar></BarCell>
                </Row>
              ))}
            </Table>
            <VScroll><VThumb /><VSpace /><VArrow><ChevDown /></VArrow></VScroll>
          </LowerWrap>
          <TabsBar>
            <BottomTab $active $w={134}><TabDoc />Таблиця типів файлів</BottomTab>
            <BottomTab $w={115}><TabBars />Топ типів файлів</BottomTab>
            <BottomTab $w={176}><TabOwner />Таблиця власників дублікатів</BottomTab>
            <BottomTab $w={170}><TabOwner bars />Топ власників дублікатів</BottomTab>
          </TabsBar>
        </Center>
        <RightPane>
          <PropGrid>
            <PropRow><PropCell>Размер</PropCell><PropCell>20,9 КБ</PropCell></PropRow>
            <PropRow><PropCell>Занимает</PropCell><PropCell>24,0 КБ</PropCell></PropRow>
            <PropHead><PropTri />Дата и Время</PropHead>
            <PropRow><PropCell>Создано</PropCell><PropCell>17.02.2018 23:00:29</PropCell></PropRow>
            <PropRow><PropCell>Изменено</PropCell><PropCell>01.01.2011 16:13:40</PropCell></PropRow>
            <PropRow><PropCell>Доступ</PropCell><PropCell>17.02.2018 23:00:29</PropCell></PropRow>
            <PropHead><PropTri />Длина пути</PropHead>
          </PropGrid>
        </RightPane>
      </Workspace>

      <StatusBar>
        <StatusLeft>Завершен</StatusLeft>
        <StatusItem $w={112} $gap={4}><StDup />Дубликатов: 79</StatusItem>
        <StatusItem $w={116} $gap={3}><StRuler />Размер: 123 МБ</StatusItem>
        <StatusItem $w={94} $gap={5}><StFile />Файлов: 244</StatusItem>
        <StatusItem $w={48} $gap={4}><StFolder />Папок</StatusItem>
      </StatusBar>
      <TaskBar>
        <TaskFolder />
        <TaskLeft><StoreIcon /></TaskLeft>
        <TaskApp><AppIcon /></TaskApp>
        <TaskEnd><ChevUp /></TaskEnd>
      </TaskBar>

      <Dialog $x={-60} $y={102} $w={537} $h={520}>
        <DlgTitle $h={30} $pad={22}>Калькулятор хеша файлов<Close /></DlgTitle>
        <HashBody>
          <Field>
            <FieldLegend>Алгоритмы хеша и параметры</FieldLegend>
            <AlgoGrid>
              {algos.map(a => <Check key={a} on h={16}>{a}</Check>)}
            </AlgoGrid>
            <ComboRow><ComboLabel>Представление хеша</ComboLabel><Combo>Шестнадцатеричный (легче читать)<ComboTri /></Combo></ComboRow>
            <PassRow><PassText>Во время хеширования сжатых файлов показать хэши этих файлов</PassText><Link>Установить пароль</Link></PassRow>
          </Field>
          <ListBox>
            <ListHead><span>Список файлов</span><ListIcons><NewItem /><RedX /><ArrowUp /><ArrowDown /></ListIcons></ListHead>
            <ListItem $sel>C:\Users\USER\Music\Alphaville2\04. Alphaville - To Germany with Love (Forever Young 1984).mp3</ListItem>
            <ListItem>C:\Users\USER\Music\Alphaville2\05. Alphaville - Fallen Angel (Forever Young 1984).mp3</ListItem>
          </ListBox>
          <ResultHead><span>Готовые хэши файлов</span><Link>Очистить все пути</Link></ResultHead>
          <OutBox>
            <OutText>{outLines.map(([p, t], i) => <OutLine key={i} $path={!!p}>{t}</OutLine>)}</OutText>
            <OutScroll><OutArrow><ChevUp /></OutArrow><OutThumb /><VSpace /><OutArrow><ChevDown /></OutArrow></OutScroll>
          </OutBox>
          <BtnRow>
            <Btn $w={155} $ml={2} $focus>Вычислить хэши файлов</Btn>
            <Btn $w={54} $ml={4} $off><GrayX />Стоп</Btn>
            <Btn $w={156} $ml={72}><CopyBtnIcon />Копировать результаты</Btn>
            <Btn $w={74} $ml={5}>Готово</Btn>
          </BtnRow>
          <Grip width="10" height="10" viewBox="0 0 10 10" fill="#aaa"><rect x="7" y="7" width="2" height="2"/><rect x="7" y="3.500" width="2" height="2"/><rect x="3.500" y="7" width="2" height="2"/><rect x="7" y="0" width="2" height="2"/><rect x="3.500" y="3.500" width="2" height="2"/><rect x="0" y="7" width="2" height="2"/></Grip>
        </HashBody>
      </Dialog>

      <Dialog $x={534} $y={148} $w={600} $h={438}>
        <DlgTitle $h={26} $pad={3}>Настройки</DlgTitle>
        <SettingsBody>
          <TabStrip>
            <SetTab $active $w={53}>Общие</SetTab>
            <SetTab $w={54}>Защита</SetTab>
            <SetTab $w={120}>Отчет о результатах</SetTab>
            <SetTab $w={80}>Обновления</SetTab>
            <SetTab $w={98}>Новые проекты</SetTab>
            <SetTab $w={90}>Кэширование</SetTab>
          </TabStrip>
          <Panel>
            <Section>При запуске</Section>
            <RadioRow><Radio /><span>Начинать с пустого проекта</span></RadioRow>
            <RadioRow><Radio $on /><span>Повторно открыть последний проект</span></RadioRow>
            <RadioRow><Radio /><ProjectLabel>Открыть следующий проект:</ProjectLabel><PathInput /></RadioRow>
            <Rule $t={3} $b={6.5} />
            <Section $b={1}>Общие опции</Section>
            <Check>Следить за точками повторной обработки ф/системы (точки монтирования, символьные ссылки)</Check>
            <Check on>Включить автозаполнение в выпадающих списках программы</Check>
            <Check>Во время фильтрации результатов поиска дубликатов, показывать соотв. родственные файлы</Check>
            <ShowRow><ShowLabel>Показать</ShowLabel><Spin><SpinVal>10</SpinVal><SpinBtns><SpinPart>▲</SpinPart><SpinPart>▼</SpinPart></SpinBtns></Spin>записей в диаграммах Топ типов и владельцев файлов (по умолчанию 10)</ShowRow>
            <Rule $t={6} $b={2} />
            <Section $b={3}>Подсказки, оповещения и предупреждения</Section>
            <Check>Никогда не спрашивать о необходимости сохранения изменений в текущем проекте</Check>
            <Check on>Показать окно оповещения на Рабочем столе после завершения поиска дубликатов</Check>
            <Check pad={18}>Только когда во время сканирования произошла одна или несколько событий</Check>
            <Check on>Предупреждать, когда для фильтрации результатов отчета применяются косвенные фильтры</Check>
            <Check on h={16}>Предупреждать при сохранении проектов, если не приобщаются результаты поиска</Check>
          </Panel>
          <Footer>
            <Btn $w={83}><HelpIcon />Справка</Btn>
            <Btn $w={80} $focus>Готово</Btn>
          </Footer>
        </SettingsBody>
      </Dialog>
    </Root>
  );
}
